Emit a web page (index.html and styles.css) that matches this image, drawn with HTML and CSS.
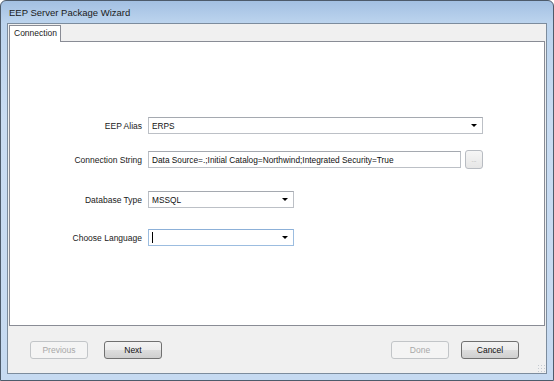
FILE: index.html
```html
<!DOCTYPE html>
<html lang="en">

<head>
    <meta charset="UTF-8">
    <title>EEP Server Package Wizard</title>
    <link rel="stylesheet" href="styles.css">
</head>

<body>
    <div class="window">
        <div class="titlebar">EEP Server Package Wizard</div>

        <div class="client">
            <div class="tabs">
                <div class="tab">Connection</div>
            </div>

            <div class="panel">
                <div class="form">
                    <div class="row row-alias">
                        <label class="label">EEP Alias</label>
                        <div class="combo combo-wide"><span class="value">ERPS</span><span class="arrow"></span></div>
                    </div>

                    <div class="row row-conn">
                        <label class="label">Connection String</label>
                        <div class="textbox"><span class="value">Data Source=.;Initial Catalog=Northwind;Integrated Security=True</span></div>
                        <button class="dots">...</button>
                    </div>

                    <div class="row row-type">
                        <label class="label">Database Type</label>
                        <div class="combo combo-small"><span class="value">MSSQL</span><span class="arrow"></span></div>
                    </div>

                    <div class="row row-lang">
                        <label class="label">Choose Language</label>
                        <div class="combo combo-small focused"><span class="caret"></span><span class="arrow"></span></div>
                    </div>
                </div>
            </div>

            <div class="footer">
                <div class="btn-group">
                    <button class="btn" disabled>Previous</button>
                    <button class="btn">Next</button>
                </div>
                <div class="btn-group">
                    <button class="btn" disabled>Done</button>
                    <button class="btn">Cancel</button>
                </div>
            </div>
        </div>

        <div class="grip"></div>
    </div>
</body>

</html>
```

FILE: styles.css
```css
body {
    margin: 0;
    padding: 0;
    background-color: #ffffff;
    font-family: 'Liberation Sans', Arial, sans-serif;
    color: #1a1a1a;
}

.window {
    position: relative;
    width: 554px;
    height: 381px;
    box-sizing: border-box;
    border: 1px solid #4d5b6b;
    border-radius: 6px 6px 0 0;
    background: linear-gradient(#a3c0e2, #bcd4ee 22px, #c9dcf2 120px, #c6daf1);
    padding: 0 6px 6px 6px;
    display: flex;
    flex-direction: column;
}

.titlebar {
    height: 22px;
    line-height: 24px;
    font-size: 9.5px;
    color: #1b1b1b;
    padding-left: 2px;
}

.client {
    flex: 1;
    display: flex;
    flex-direction: column;
    background-color: #f0f0f0;
    border: 1px solid #7c8c9d;
}

.tabs {
    height: 16px;
    padding-left: 1px;
    padding-top: 1px;
    display: flex;
}

.tab {
    background-color: #ffffff;
    border: 1px solid #898c95;
    border-bottom: none;
    padding: 0 3px 0 4px;
    font-size: 8.5px;
    line-height: 15px;
    margin-bottom: -1px;
    position: relative;
    z-index: 1;
}

.panel {
    height: 283px;
    margin: 0 1px 0 1px;
    background-color: #ffffff;
    border: 1px solid #898c95;
}

.form {
    padding-top: 75px;
    display: flex;
    flex-direction: column;
}

.row {
    display: flex;
    align-items: center;
}

.row-alias {
    height: 17px;
}

.row-conn {
    height: 19px;
    margin-top: 16px;
}

.row-type {
    height: 17px;
    margin-top: 22px;
}

.row-lang {
    height: 17px;
    margin-top: 21px;
}

.label {
    width: 132px;
    text-align: right;
    font-size: 8.5px;
    margin-right: 6px;
    color: #1a1a1a;
}

.combo,
.textbox {
    position: relative;
    height: 17px;
    box-sizing: border-box;
    border: 1px solid #bcc0c6;
    border-top-color: #a5a9b0;
    background-color: #ffffff;
    display: flex;
    align-items: center;
    padding-left: 3px;
}

.combo-wide {
    width: 335px;
}

.combo-small {
    width: 146px;
}

.textbox {
    width: 313px;
}

.focused {
    border-color: #9cbde0;
    border-top-color: #8cb0d8;
}

.value {
    font-size: 8.3px;
    color: #111111;
    white-space: nowrap;
}

.caret {
    width: 1px;
    height: 11px;
    background-color: #000000;
}

.arrow {
    position: absolute;
    right: 5px;
    top: 6px;
    width: 0;
    height: 0;
    border-left: 3px solid transparent;
    border-right: 3px solid transparent;
    border-top: 3px solid #000000;
}

.dots {
    width: 18px;
    height: 19px;
    margin-left: 4px;
    padding: 0;
    box-sizing: border-box;
    border: 1px solid #b8bcc2;
    border-radius: 3px;
    background: linear-gradient(#f6f6f6, #e6e6e6);
    font-size: 6px;
    color: #9a9a9a;
    font-family: 'Liberation Sans', Arial, sans-serif;
}

.footer {
    flex: 1;
    display: flex;
    justify-content: space-between;
    padding: 15px 27px 0 22px;
}

.btn-group {
    display: flex;
    gap: 16px;
}

.btn-group + .btn-group {
    gap: 12px;
}

.btn {
    width: 58px;
    height: 18px;
    padding: 0;
    box-sizing: border-box;
    border: 1px solid #707070;
    border-radius: 3px;
    background: linear-gradient(#f3f3f3, #ebebeb 50%, #dddddd 51%, #cfcfcf);
    font-family: 'Liberation Sans', Arial, sans-serif;
    font-size: 8.5px;
    color: #111111;
}

.btn:disabled {
    border-color: #c2c5c8;
    background: #f4f4f4;
    color: #a8a8a8;
}

.grip {
    position: absolute;
    right: 8px;
    bottom: 8px;
    width: 8px;
    height: 8px;
    background: radial-gradient(circle, #b0b8c2 0.8px, transparent 1px) 0 0 / 3px 3px;
    opacity: 0.7;
}
```
